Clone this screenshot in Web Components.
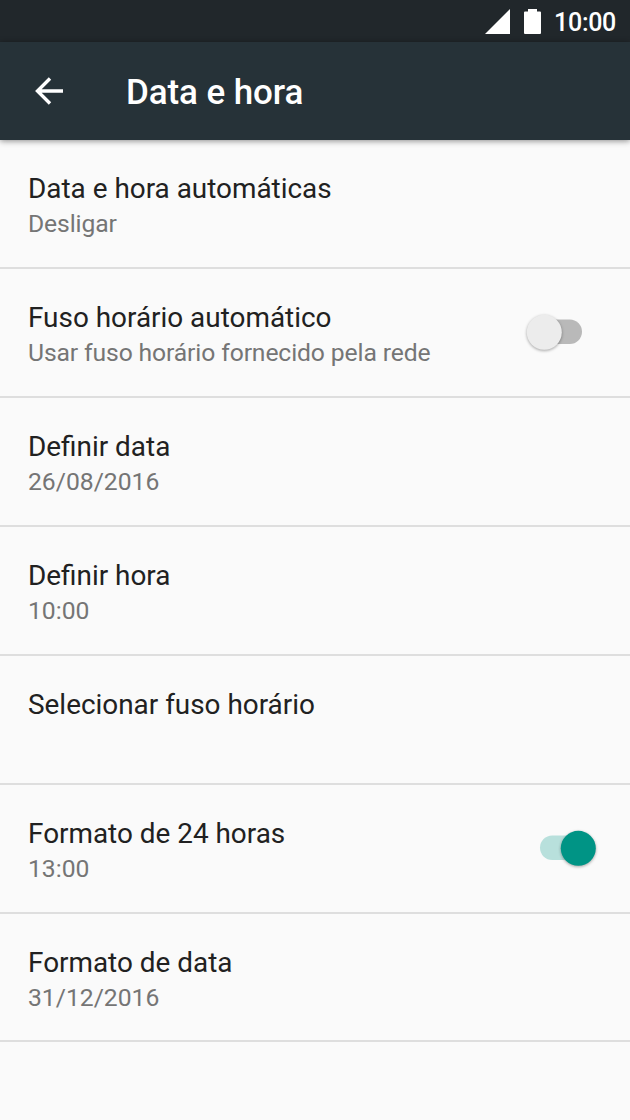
<!DOCTYPE html>
<html lang="pt"><head><meta charset="utf-8"><title>Data e hora</title>
<style>html,body{margin:0;height:100%;background:#fafafa}body{font-family:Roboto,"Noto Sans",sans-serif;overflow:hidden}</style></head><body>
<settings-screen></settings-screen>
<script>
function define(name, html){
  customElements.define(name, class extends HTMLElement{
    constructor(){super();this.attachShadow({mode:'open'}).innerHTML=html;}
  });
}
define('status-bar',`<style>:host{display:flex;box-sizing:border-box;height:42px;background:#21272b;color:#fff;justify-content:flex-end;align-items:center;padding-right:14px;font-size:25px;letter-spacing:-.3px;font-weight:500;line-height:39px}svg{display:block;flex:none}.s{margin-right:14px}.b{margin-right:13px}span{padding-top:3px}</style>
<svg class="s" width="25" height="25" viewBox="0 0 25 25"><path d="M25 0V25H0Z" fill="#fff"/></svg>
<svg class="b" width="17" height="25" viewBox="0 0 17 25"><path d="M4 0h9v2.5h3q1 0 1 1V24q0 1-1 1H1q-1 0-1-1V3.500q0-1 1-1h3z" fill="#fff"/></svg><span><slot></slot></span>`);
define('app-bar',`<style>:host{display:flex;box-sizing:border-box;height:98px;background:#263238;color:#fff;align-items:center;padding-left:35px;box-shadow:0 1px 6px rgba(0,0,0,.45);position:relative}svg{display:block;margin-right:63px}h1{margin:0;padding-top:4px;font-size:35px;letter-spacing:-.1px;font-weight:500;line-height:42px;white-space:nowrap}</style>
<svg width="28" height="28" viewBox="0 0 28 28"><path d="M28 14H3M15 1.500L2.500 14 15 26.500" fill="none" stroke="#fff" stroke-width="3.4"/></svg><h1><slot></slot></h1>`);
define('toggle-switch',`<style>:host{display:block;width:70px;height:50px}svg{display:block;overflow:visible}.track{fill:#b9b9b9}.thumb{fill:#ececec;filter:drop-shadow(0 1.5px 1.5px rgba(0,0,0,.35))}:host([checked]) .track{fill:#b8e0dc}:host([checked]) .thumb{fill:#009485;transform:translateX(34px)}</style>
<svg width="70" height="50"><rect class="track" x="14" y="12.500" width="42" height="24.500" rx="12.250"/><circle class="thumb" cx="18.300" cy="25.300" r="17.500"/></svg>`);
define('setting-row',`<style>:host{display:flex;box-sizing:border-box;height:128.93px;border-bottom:2px solid #dedede;padding:0 34px 0 28px;justify-content:space-between}.copy{padding-top:31px;white-space:nowrap}.title{font-size:27.9px;line-height:35px;color:#212121}.summary{font-size:24.7px;letter-spacing:-.12px;line-height:35px;color:#757575}.widget{padding-top:38px}</style>
<div class="copy"><div class="title"><slot></slot></div><div class="summary"><slot name="summary"></slot></div></div><div class="widget"><slot name="widget"></slot></div>`);
define('settings-screen',`<style>:host{display:flex;flex-direction:column;width:630px;height:1120px;background:#fafafa}main{display:block}.num{letter-spacing:0}</style>
<status-bar>10:00</status-bar><app-bar>Data e hora</app-bar>
<main><setting-row>Data e hora automáticas<span slot="summary">Desligar</span></setting-row>
<setting-row>Fuso horário automático<span slot="summary">Usar fuso horário fornecido pela rede</span><toggle-switch slot="widget"></toggle-switch></setting-row>
<setting-row>Definir data<span class="num" slot="summary">26/08/2016</span></setting-row>
<setting-row>Definir hora<span class="num" slot="summary">10:00</span></setting-row>
<setting-row>Selecionar fuso horário</setting-row>
<setting-row>Formato de 24 horas<span class="num" slot="summary">13:00</span><toggle-switch slot="widget" checked></toggle-switch></setting-row>
<setting-row>Formato de data<span class="num" slot="summary">31/12/2016</span></setting-row></main>`);
</script></body></html>
